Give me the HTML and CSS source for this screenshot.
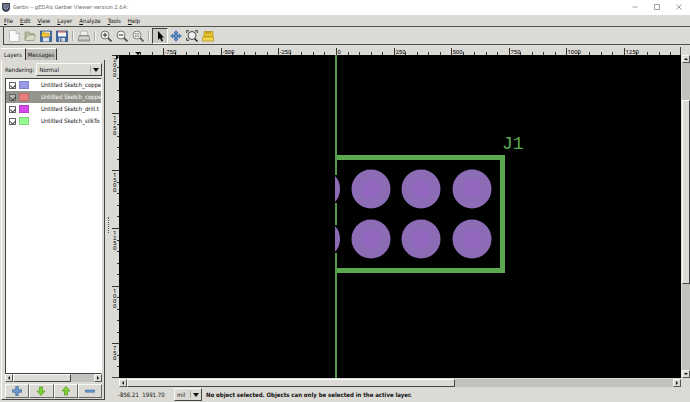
FILE: index.html
```
<!DOCTYPE html>
<html lang="en">
<head>
  <meta charset="UTF-8">
  <meta name="viewport" content="width=device-width, initial-scale=1.0">
  <title>Gerbv</title>
  <link rel="stylesheet" href="styles.css">
</head>
<body>
  <div class="window">
    <header class="titlebar">
      <svg class="app-icon" viewBox="0 0 8 9"><path d="M0 0h8v5q0 3-4 4q-4-1-4-4z" fill="#3b4056"/><path d="M2 1v4l1 1M4 1v6M6 1v4l-1 1" stroke="#c3c9d8" fill="none" stroke-width=".8"/></svg>
      <h1>Gerbv -- gEDA's Gerber Viewer version 2.6A:</h1>
      <div class="window-buttons">
        <button aria-label="Minimize"><svg viewBox="0 0 6 6"><path d="M.5 3h5"/></svg></button>
        <button aria-label="Maximize"><svg viewBox="0 0 6 6"><path d="M.5.5h5v5h-5z"/></svg></button>
        <button aria-label="Close"><svg viewBox="0 0 6 6"><path d="M.5.5l5 5M5.5.5l-5 5"/></svg></button>
      </div>
    </header>

    <nav class="menubar">
      <a href="#"><u>F</u>ile</a>
      <a href="#"><u>E</u>dit</a>
      <a href="#"><u>V</u>iew</a>
      <a href="#"><u>L</u>ayer</a>
      <a href="#"><u>A</u>nalyze</a>
      <a href="#"><u>T</u>ools</a>
      <a href="#"><u>H</u>elp</a>
    </nav>

    <div class="toolbar">
      <button aria-label="New"><svg viewBox="0 0 12 12"><path d="M1.500.5h6.500l3 3v8h-9.500z" fill="#fafafa" stroke="#aaa" stroke-width=".7"/><path d="M8 .5v3h3" fill="#ddd" stroke="#aaa" stroke-width=".7"/></svg></button>
      <button aria-label="Open"><svg viewBox="0 0 12 12"><path d="M1 10V2h4l1 1.500h4V5" fill="#b9bfa4" stroke="#8d937c" stroke-width=".7"/><path d="M1 10.500L3 5h8.500l-1.500 5.500z" fill="#d6dcc2" stroke="#8d937c" stroke-width=".7"/></svg></button>
      <button aria-label="Revert"><svg viewBox="0 0 12 12"><path d="M.5 1h11v10.500H.5z" fill="#3c6ba8" stroke="#27487a" stroke-width=".7"/><path d="M3 7.500h6v4H3z" fill="#dce3ea"/><path d="M2 1.500h8v5H2z" fill="#eee3b5"/><path d="M1 5.500l3-4 1.500 2H9v3H5l-1 1z" fill="#f0c530" stroke="#a77b14" stroke-width=".4"/></svg></button>
      <button aria-label="Save"><svg viewBox="0 0 12 12"><path d="M.5 1h11v10.500H.5z" fill="#3c6ba8" stroke="#27487a" stroke-width=".7"/><path d="M2 1.500h8v5H2z" fill="#f5f5f5"/><path d="M2 1.300h8v1.200H2z" fill="#c65050"/><path d="M3 8h6v3.500H3z" fill="#d3d8dd"/><path d="M4 8.500h1.500v2.500H4z" fill="#3c6ba8"/></svg></button>
      <span class="sep"></span>
      <button aria-label="Print"><svg viewBox="0 0 12 12"><path d="M3 1h6l1 5H2z" fill="#eee" stroke="#999" stroke-width=".6"/><path d="M1.500 5.500h9L11.500 8v3H.5V8z" fill="#b4b4b0" stroke="#777" stroke-width=".7"/><path d="M1 8h10" stroke="#efefed"/></svg></button>
      <span class="sep"></span>
      <button aria-label="Zoom in"><svg viewBox="0 0 12 12"><path d="M7.500 7.500l4 4" stroke="#555" stroke-width="1.800"/><circle cx="5" cy="5" r="4" fill="#f3f3f1" stroke="#777"/><path d="M2.800 5h4.400M5 2.800v4.400" stroke="#333"/></svg></button>
      <button aria-label="Zoom out"><svg viewBox="0 0 12 12"><path d="M7.500 7.500l4 4" stroke="#555" stroke-width="1.800"/><circle cx="5" cy="5" r="4" fill="#f3f3f1" stroke="#777"/><path d="M2.800 5h4.400" stroke="#333"/></svg></button>
      <button aria-label="Fit"><svg viewBox="0 0 12 12"><path d="M7.500 7.500l4 4" stroke="#666" stroke-width="1.800"/><circle cx="5" cy="5" r="4" fill="#eee" stroke="#888"/><path d="M3 3h4v4H3z" fill="#999"/><path d="M5 2v6M2 5h6" stroke="#eee" stroke-width=".8"/></svg></button>
      <span class="sep"></span>
      <button class="active" aria-label="Pointer"><svg viewBox="0 0 12 12"><path d="M4 1v9l2-2 1.500 3.500 1.500-.7L7.500 7.500H10z" fill="#000"/></svg></button>
      <button aria-label="Pan"><svg viewBox="0 0 12 12"><path d="M6 .5l2 2.500H7v2h2V4l2.500 2L9 8V7H7v2h1l-2 2.500L4 9h1V7H3v1L.5 6 3 4v1h2V3H4z" fill="#5b8cc9" stroke="#2f5d99" stroke-width=".6"/></svg></button>
      <button aria-label="Zoom area"><svg viewBox="0 0 12 12"><path d="M8 8l3.500 3.500" stroke="#222" stroke-width="1.500"/><circle cx="6" cy="5.500" r="4" fill="#eee" stroke="#444"/><path d="M.7 3V.7H3M9 .7h2.300V3M.7 8v2.300H3" fill="none" stroke="#222" stroke-width=".9"/></svg></button>
      <button aria-label="Measure"><svg viewBox="0 0 12 12"><path d="M2 1.500h9V7H2z" fill="#e5c02c" stroke="#b08f14" stroke-width=".6"/><path d="M.5 7h11v4H.5z" fill="#f2d64b" stroke="#b08f14" stroke-width=".7"/><path d="M4 1.500v2M6 1.500v2M8 1.500v2" stroke="#8a6d0d" stroke-width=".7"/></svg></button>
    </div>

    <main class="content">
      <aside class="sidebar">
        <div class="tabs">
          <button class="tab selected">Layers</button>
          <button class="tab">Messages</button>
        </div>
        <div class="panel">
          <div class="rendering">
            <label for="rendering">Rendering:</label>
            <span class="combo">
              <select id="rendering"><option>Normal</option></select>
            </span>
          </div>
          <ul class="layers">
            <li><input type="checkbox" id="layer1" checked><span class="swatch blue"></span><label for="layer1">Untitled Sketch_coppe</label></li>
            <li class="selected"><input type="checkbox" id="layer2" checked><span class="swatch red"></span><label for="layer2">Untitled Sketch_coppe</label></li>
            <li><input type="checkbox" id="layer3" checked><span class="swatch magenta"></span><label for="layer3">Untitled Sketch_drill.t</label></li>
            <li><input type="checkbox" id="layer4" checked><span class="swatch green"></span><label for="layer4">Untitled Sketch_silkTo</label></li>
          </ul>
          <div class="scroll horizontal list-scroll">
            <span class="arrow left"></span>
            <div class="trough"><div class="thumb"></div></div>
            <span class="arrow right"></span>
          </div>
          <div class="layer-buttons">
            <button aria-label="Add layer"><svg viewBox="0 0 10 10"><path d="M3.700.5h2.600v3.200h3.200v2.600H6.300v3.200H3.700V6.300H.5V3.700h3.200z" fill="#6c9ad0" stroke="#3a689f" stroke-width=".7"/></svg></button>
            <button aria-label="Move down"><svg viewBox="0 0 10 10"><path d="M3.500 1h3v4H9L5 9.500 1 5h2.500z" fill="#7fd13b" stroke="#4e9a10" stroke-width=".7"/></svg></button>
            <button aria-label="Move up"><svg viewBox="0 0 10 10"><path d="M3.500 9h3V5H9L5 .5 1 5h2.500z" fill="#7fd13b" stroke="#4e9a10" stroke-width=".7"/></svg></button>
            <button aria-label="Remove layer"><svg viewBox="0 0 10 10"><path d="M.5 4h9v2.200h-9z" fill="#6c9ad0" stroke="#3a689f" stroke-width=".6"/></svg></button>
          </div>
        </div>
      </aside>

      <div class="handle"></div>

      <section class="viewer">
        <svg class="ruler-top" id="rulerTop"></svg>
        <svg class="ruler-left" id="rulerLeft"></svg>
        <svg class="board">
          <!-- silkscreen outline -->
          <path d="M217 102.500H383.500V215.500H217" fill="none" stroke="#5aa94f" stroke-width="5"/>
          <path d="M217 0V120M217 148V170M217 198V2000" stroke="#57984f" stroke-width="2"/>
          <!-- pads cut off by the board edge -->
          <path d="M216 121Q221 126 221 134T216 147zM216 171Q221 176 221 184T216 197z" fill="#8b6cb5"/>
          <g id="pads"></g>
          <text x="383" y="94" class="refdes">J1</text>
        </svg>
        <div class="scroll vertical">
          <span class="arrow up"></span>
          <div class="trough"><div class="thumb"></div></div>
          <span class="arrow down"></span>
        </div>
        <div class="scroll horizontal board-scroll">
          <span class="arrow left"></span>
          <div class="trough"><div class="thumb"></div></div>
          <span class="arrow right"></span>
        </div>
        <footer class="status">
          <span class="coords">-856.21&nbsp; 1991.70</span>
          <span class="combo unit">
            <select aria-label="Unit"><option>mil</option></select>
          </span>
          <strong>No object selected. Objects can only be selected in the active layer.</strong>
        </footer>
      </section>
    </main>
  </div>
  <script src="script.js"></script>
</body>
</html>
```
FILE: styles.css
```
* {
  margin: 0;
  padding: 0;
  box-sizing: border-box;
}
html, body {
  height: 100%;
}
body {
  font-family: "DejaVu Sans Condensed", "DejaVu Sans", sans-serif;
  font-size: 6px;
  line-height: 8px;
  color: #111;
  background: #dbdad5;
  overflow: hidden;
}
button, select, input {
  font: inherit;
  color: inherit;
  border: none;
  background: none;
}
svg {
  display: block;
}
.window {
  height: 100%;
  display: flex;
  flex-direction: column;
}

/* Title bar */
.titlebar {
  height: 15px;
  display: flex;
  align-items: center;
  gap: 3px;
  padding: 0 0 1px 2px;
  background: #fff;
}
.app-icon {
  width: 8px;
  height: 9px;
}
.titlebar h1 {
  flex: 1;
  font-family: Roboto, sans-serif;
  font-size: 6px;
  font-weight: normal;
  color: #777;
}
.window-buttons {
  display: flex;
}
.window-buttons button {
  width: 22px;
  height: 14px;
  display: grid;
  place-items: center;
}
.window-buttons svg {
  width: 6px;
  height: 6px;
  fill: none;
  stroke: #888;
  stroke-width: 0.8;
}

/* Menu and toolbar */
.menubar {
  height: 12px;
  display: flex;
  align-items: center;
  gap: 7px;
  padding: 0 4px;
  border-bottom: 1px solid #55534e;
}
.menubar a {
  color: inherit;
  text-decoration: none;
}
.toolbar {
  height: 18px;
  display: flex;
  align-items: center;
  margin-left: 3px;
  padding-left: 2px;
  border-left: 1px solid #444;
  border-bottom: 1px solid #55534e;
}
.toolbar button {
  width: 16px;
  height: 16px;
  display: grid;
  place-items: center;
}
.toolbar svg {
  width: 12px;
  height: 12px;
}
.toolbar .active {
  background: #c9c8c3;
  border: 1px solid #444;
  border-right-color: #fff;
  border-bottom-color: #fff;
}
.sep {
  width: 2px;
  height: 10px;
  margin: 0 2px;
  border-left: 1px solid #aaa9a4;
  border-right: 1px solid #f4f4f2;
}

.content {
  flex: 1;
  min-height: 0;
  display: grid;
  grid-template-columns: 105px 7px 1fr;
  padding-top: 2px;
}

/* Layer list */
.sidebar {
  display: flex;
  flex-direction: column;
  min-height: 0;
  padding: 1px 0 2px 1px;
}
.tabs {
  display: flex;
  align-items: flex-end;
}
.tab {
  height: 12px;
  padding: 0 2px;
  background: #c0bfba;
  border-top: 1px solid #fff;
  border-right: 1px solid #333;
}
.tab.selected {
  padding: 0 3px;
  background: #dbdad5;
}
.panel {
  flex: 1;
  min-height: 0;
  display: flex;
  flex-direction: column;
  padding: 3px 2px 1px 3px;
  border-left: 1px solid #fff;
  border-right: 1px solid #444;
  border-bottom: 1px solid #444;
}
.rendering {
  display: flex;
  align-items: center;
  gap: 2px;
  margin-bottom: 2px;
}
.combo {
  flex: 1;
  height: 13px;
  position: relative;
  border: 1px solid #f8f8f6;
  border-right-color: #444;
  border-bottom-color: #444;
}
.combo select {
  width: 100%;
  height: 100%;
  padding-left: 2px;
  appearance: none;
}
.combo::before {
  content: "";
  position: absolute;
  top: 2px;
  right: 10px;
  bottom: 2px;
  border-left: 1px solid #aaa9a4;
}
.combo::after {
  content: "";
  position: absolute;
  top: 4px;
  right: 2px;
  border: 3px solid transparent;
  border-top: 4px solid #111;
  border-bottom: none;
}
.layers {
  flex: 1;
  min-height: 0;
  overflow: hidden;
  list-style: none;
  background: #fff;
  border: 1px solid #444;
  border-right-color: #fff;
}
.layers li {
  height: 12px;
  display: flex;
  align-items: center;
  padding-left: 3px;
  white-space: nowrap;
}
.layers li.selected {
  color: #fff;
  background: #94938c;
}
.layers input {
  width: 7px;
  height: 7px;
  position: relative;
  flex: none;
  appearance: none;
  background: #fff;
  border: 1px solid #666;
}
.layers .selected input {
  background: #b9b8b2;
}
.layers input:checked::after {
  content: "";
  position: absolute;
  left: 1px;
  top: 0;
  width: 3px;
  height: 4px;
  border: solid #444;
  border-width: 0 1px 1px 0;
  transform: rotate(45deg);
}
.swatch {
  width: 10px;
  height: 8px;
  flex: none;
  margin: 0 12px 0 3px;
  border: 1px solid rgba(0, 0, 0, 0.15);
}
.swatch.blue { background: #9a9aea; }
.swatch.red { background: #e87e7c; }
.swatch.magenta { background: #d44aea; }
.swatch.green { background: #98fb90; }

.layer-buttons {
  display: grid;
  grid-template-columns: repeat(4, 1fr);
  margin-top: 2px;
}
.layer-buttons button {
  height: 14px;
  display: grid;
  place-items: center;
  border: 1px solid #f8f8f6;
  border-right-color: #666;
  border-bottom-color: #666;
}
.layer-buttons svg {
  width: 10px;
  height: 10px;
}

/* Scrollbars */
.scroll {
  display: flex;
  background: #c2c1bc;
}
.scroll.vertical {
  flex-direction: column;
}
.trough {
  flex: 1;
}
.thumb {
  background: #dbdad5;
  border: 1px solid #f8f8f6;
  border-right-color: #444;
  border-bottom-color: #444;
}
.horizontal {
  height: 8px;
}
.horizontal .thumb {
  height: 100%;
  width: 60%;
}
.list-scroll .thumb {
  width: 72%;
}
.vertical .thumb {
  height: 60%;
  margin-top: 37px;
}
.arrow {
  width: 8px;
  height: 8px;
  display: grid;
  place-items: center;
  background: #dbdad5;
  border: 1px solid #f8f8f6;
  border-right-color: #555;
  border-bottom-color: #555;
}
.arrow::before {
  content: "";
  border: 2px solid transparent;
}
.arrow.left::before { border-right-color: #111; border-left: none; }
.arrow.right::before { border-left-color: #111; border-right: none; }
.arrow.up::before { border-bottom-color: #111; border-top: none; }
.arrow.down::before { border-top-color: #111; border-bottom: none; }

.handle {
  align-self: center;
  justify-self: center;
  width: 1px;
  height: 16px;
  border-left: 1px dotted #55534e;
}

/* Board view with rulers */
.viewer {
  min-width: 0;
  min-height: 0;
  display: grid;
  grid-template-columns: 7px 1fr 9px;
  grid-template-rows: 8px 1fr 9px 15px;
}
.ruler-top {
  grid-area: 1 / 2;
  width: 100%;
  height: 8px;
  border-right: 1px solid #444;
}
.ruler-left {
  grid-area: 2 / 1;
  width: 7px;
  height: 100%;
  border-bottom: 1px solid #444;
}
.ruler-top line, .ruler-left line {
  stroke: #333;
}
.ruler-top text, .ruler-left text {
  font-family: Roboto, sans-serif;
}
.board {
  grid-area: 2 / 2;
  width: 100%;
  height: 100%;
  background: #000;
}
.refdes {
  font-family: "Liberation Mono", monospace;
  font-size: 18px;
  fill: #5aa94f;
}
.scroll.vertical {
  grid-area: 2 / 3;
  margin-left: 1px;
}
.board-scroll {
  grid-area: 3 / 2;
  margin-top: 1px;
}
.status {
  grid-area: 4 / 1 / 5 / 4;
  display: flex;
  align-items: center;
  padding-left: 6px;
}
.coords {
  width: 56px;
}
.combo.unit {
  flex: none;
  width: 28px;
}
.status strong {
  margin-left: 4px;
}
```
FILE: script.js
```
const NS = "http://www.w3.org/2000/svg";
const rulerTop = document.getElementById("rulerTop");
const rulerLeft = document.getElementById("rulerLeft");
const pads = document.getElementById("pads");

const pxPerMil = 0.2304;
const originX = 217;  // where 0 mil is on the top ruler
const originY = 461;  // where 0 mil is on the left ruler

function add(parent, name, attrs, text) {
  const el = document.createElementNS(NS, name);
  for (const key in attrs) el.setAttribute(key, attrs[key]);
  if (text !== undefined) el.textContent = text;
  parent.appendChild(el);
}

// Rulers are drawn again when the window changes size
function drawRulers() {
  rulerTop.innerHTML = "";
  rulerLeft.innerHTML = "";
  const width = rulerTop.clientWidth;
  const height = rulerLeft.clientHeight;

  for (let mil = -900; ; mil += 50) {
    const x = Math.round(originX + mil * pxPerMil) + 0.5;
    if (x > width) break;
    const major = mil % 250 === 0;
    add(rulerTop, "line", { x1: x, x2: x, y1: major ? 1 : 5, y2: 8 });
    if (major) add(rulerTop, "text", { x: x + 1, y: 7 }, mil);
  }

  // digits are stacked on the left ruler
  for (let mil = 2000; ; mil -= 50) {
    const y = Math.round(originY - mil * pxPerMil) + 0.5;
    if (y > height) break;
    const major = mil % 250 === 0;
    add(rulerLeft, "line", { x1: major ? 0 : 5, x2: 7, y1: y, y2: y });
    if (major) {
      String(mil).split("").forEach((digit, i) => {
        add(rulerLeft, "text", { x: 1, y: y + 6 + i * 5 }, digit);
      });
    }
  }

  // markers for the pointer position
  add(rulerTop, "path", { d: "M16 5h6l-3 3z" });
  add(rulerLeft, "path", { d: "M4 0v5l3-3z" });
}

// Pads with their drill holes
for (const cy of [134, 184]) {
  for (const cx of [252, 302, 353]) {
    add(pads, "circle", { cx: cx, cy: cy, r: 19.5, fill: "#8b6cb5" });
    add(pads, "circle", { cx: cx, cy: cy, r: 9.5, fill: "#9468c0" });
  }
}

window.addEventListener("resize", drawRulers);
drawRulers();
```
